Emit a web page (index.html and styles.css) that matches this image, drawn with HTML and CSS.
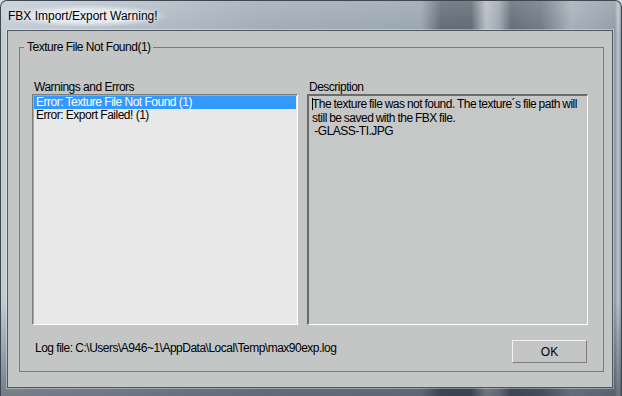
FILE: index.html
```html
<!DOCTYPE html>
<html lang="en">
<head>
    <meta charset="UTF-8">
    <title>FBX Import/Export Warning!</title>
    <link rel="stylesheet" href="styles.css">
</head>
<body>
    <div class="window">
        <div class="titlebar">
            <span class="title">FBX Import/Export Warning!</span>
        </div>
        <div class="client">
            <fieldset class="group">
                <legend>Texture File Not Found(1)</legend>
                <div class="panes">
                    <div class="pane pane-list">
                        <div class="pane-label">Warnings and Errors</div>
                        <ul class="listbox">
                            <li class="selected">Error: Texture File Not Found (1)</li>
                            <li>Error: Export Failed! (1)</li>
                        </ul>
                    </div>
                    <div class="pane pane-desc">
                        <div class="pane-label">Description</div>
                        <div class="desc-box"><span class="caret"></span>The texture file was not found. The texture´s file path will still be saved with the FBX file.<br>&nbsp;-GLASS-TI.JPG</div>
                    </div>
                </div>
                <div class="footer">
                    <span class="logfile">Log file: C:\Users\A946~1\AppData\Local\Temp\max90exp.log</span>
                    <button class="ok-btn">OK</button>
                </div>
            </fieldset>
        </div>
    </div>
</body>
</html>
```

FILE: styles.css
```css
body {
    margin: 0;
    background-color: #d8dde2;
    font-family: "Liberation Sans", Arial, sans-serif;
    font-size: 12px;
    letter-spacing: -0.5px;
    color: #000;
}
.window {
    width: 622px;
    height: 396px;
    box-sizing: border-box;
    display: flex;
    flex-direction: column;
    border: 1px solid #3e4852;
    border-bottom: none;
    border-radius: 7px 7px 0 0;
    background:
        linear-gradient(to bottom, rgba(255,255,255,0.18) 0, rgba(255,255,255,0) 40px, rgba(0,0,0,0) 300px, rgba(20,30,40,0.45) 100%),
        linear-gradient(to right, #c3cbd3 0, #b3bdc7 120px, #9ea9b4 260px, #96a2ae 420px, #5b6570 440px, #59636e 470px, #b2bac2 485px, #9aa3ac 498px, #5d6772 510px, #6a7480 540px, #a2acb6 570px, #8e99a5 614px, #bcc4cc 617px, #6f7b87 622px);
    overflow: hidden;
}
.titlebar {
    height: 29px;
    display: flex;
    align-items: center;
    padding-left: 7px;
}
.title {
    letter-spacing: 0;
    padding: 4px 10px 4px 1px;
    margin-left: -1px;
    background: radial-gradient(ellipse at center, rgba(235,240,245,0.85) 40%, rgba(235,240,245,0) 72%);
    text-shadow: 0 0 6px rgba(255,255,255,0.9);
}
.client {
    flex: 1;
    margin: 0 8px 8px 6px;
    border: 1px solid #4c5763;
    box-shadow: 0 0 0 1px rgba(255,255,255,0.35);
    background-color: #c4c6c6;
    padding: 9px 8px 15px 11px;
    display: flex;
}
.group {
    flex: 1;
    margin: 0;
    border: 1px solid #7a7c7c;
    padding: 27px 15px 6px 12px;
    display: flex;
    flex-direction: column;
    min-width: 0;
}
.group legend {
    margin-left: -8px;
    padding: 0 2px 0 3px;
    line-height: 14px;
}
.panes {
    display: flex;
    gap: 9px;
}
.pane {
    display: flex;
    flex-direction: column;
}
.pane-list {
    width: 266px;
}
.pane-desc {
    width: 281px;
}
.pane-label {
    line-height: 13px;
    padding-left: 3px;
    margin-left: -1px;
}
.listbox {
    margin: 0;
    padding: 1px 1px 0 1px;
    list-style: none;
    height: 231px;
    box-sizing: border-box;
    background-color: #e8e8e8;
    border-top: 1px solid #7c7c7c;
    border-left: 1px solid #7c7c7c;
    border-right: 1px solid #ffffff;
    border-bottom: 1px solid #ffffff;
    box-shadow: inset 1px 1px 0 #a8a8a8;
}
.listbox li {
    line-height: 13px;
    padding-left: 2px;
}
.listbox li.selected {
    background-color: #3399ff;
    color: #ffffff;
}
.desc-box {
    height: 231px;
    box-sizing: border-box;
    padding: 2px 2px 2px 3px;
    line-height: 13.5px;
    word-spacing: -0.5px;
    background-color: #c6c7c7;
    border-top: 2px solid #6b6b6b;
    border-left: 2px solid #6b6b6b;
    border-right: 1px solid #ffffff;
    border-bottom: 1px solid #ffffff;
}
.caret {
    display: inline-block;
    width: 1px;
    height: 12px;
    margin-right: -1px;
    vertical-align: -2px;
    background-color: #000;
}
.footer {
    display: flex;
    justify-content: space-between;
    align-items: center;
    margin-top: 15px;
    padding: 0 1px 0 3px;
}
.logfile {
    margin-top: -7px;
}
.ok-btn {
    width: 75px;
    height: 23px;
    font: inherit;
    letter-spacing: 0;
    color: #000;
    background-color: #c4c6c6;
    border-top: 1px solid #f2f2f2;
    border-left: 1px solid #f2f2f2;
    border-right: 1px solid #7e7e7e;
    border-bottom: 1px solid #7e7e7e;
    padding: 0;
}
```
